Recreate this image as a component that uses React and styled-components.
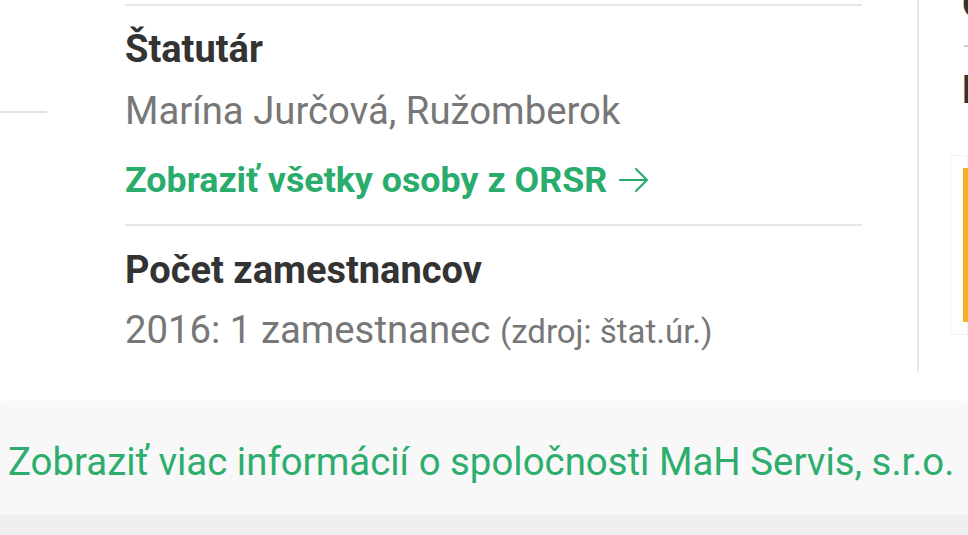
import React from "react"
import styled, { createGlobalStyle } from "styled-components"

const GlobalStyle = createGlobalStyle`
  html, body {
    margin: 0;
    padding: 0;
    background: #ffffff;
    font-family: Roboto, "Liberation Sans", Arial, sans-serif;
  }
`

const Page = styled.div`
  width: 968px;
  height: 535px;
  overflow: hidden;
  display: flex;
  flex-direction: column;
  background: #ffffff;
`

const Columns = styled.div`
  display: flex;
  height: 372px;
  flex-shrink: 0;
`

const Side = styled.aside`
  width: 47px;
  padding-top: 111px;
  flex-shrink: 0;
`

const SideRule = styled.div`
  height: 2px;
  background: #e2e2e2;
`

const Main = styled.main`
  width: 737px;
  flex-shrink: 0;
  margin-left: 23px;
  padding: 4px 55px 0 55px;
  border-right: 2px solid #e8e8e8;
`

const Section = styled.section`
  border-top: 2px solid #e6e6e6;
  padding: ${p => p.$top}px 0 ${p => p.$bottom}px;
`

const Label = styled.h3`
  margin: 0;
  font-size: 38px;
  line-height: 46px;
  font-weight: 700;
  color: #333333;
`

const Value = styled.p`
  margin: ${p => p.$gap}px 0 0;
  font-size: 38.3px;
  line-height: 46px;
  color: #777777;
`

const Source = styled.span`
  font-size: 33px;
`

const MoreLink = styled.a`
  display: flex;
  align-items: center;
  gap: 11px;
  margin-top: 23px;
  font-size: 35.8px;
  line-height: 46px;
  font-weight: 700;
  color: #29ac6c;
  text-decoration: none;
`

const Aside = styled.aside`
  flex: 1;
  padding-left: 43px;
  overflow: hidden;
  white-space: nowrap;
`

const AsideTitle = styled.div`
  margin-top: ${p => p.$top}px;
  font-size: 38px;
  line-height: 46px;
  font-weight: 700;
  color: #333333;
`

const AsideMeta = styled.div`
  font-size: 20px;
  line-height: 24px;
  color: #c4c4c4;
  margin-top: 8px;
`

const Notice = styled.div`
  margin-top: 42px;
  margin-left: -12px;
  padding: 12px 0 12px 12px;
  border: 1px solid #f3f3f3;
`

const NoticeBar = styled.div`
  height: 154px;
  border-left: 6px solid #f5b027;
`

const Footer = styled.footer`
  margin-top: 30px;
  height: 113px;
  flex-shrink: 0;
  display: flex;
  align-items: center;
  padding: 6px 0 0 8px;
  box-sizing: border-box;
  background: #f8f8f8;
  box-shadow: 0 -1px 2px rgba(0, 0, 0, 0.04);
`

const FooterLink = styled.a`
  font-size: 38.4px;
  line-height: 46px;
  color: #2dad6e;
  text-decoration: none;
  white-space: nowrap;
`

const Bottom = styled.div`
  flex: 1;
  background: #efefef;
`

function Arrow() {
  return (
    <svg width="32" height="26" viewBox="0 0 32 26" fill="none">
      <path
        d="M2 13H29M18 2L29 13L18 24"
        stroke="#29ac6c"
        strokeWidth="2.2"
        strokeLinecap="round"
        strokeLinejoin="round"
      />
    </svg>
  )
}

export default function App() {
  return (
    <Page>
      <GlobalStyle />
      <Columns>
        <Side>
          <SideRule />
        </Side>
        <Main>
          <Section $top={20} $bottom={21}>
            <Label>Štatutár</Label>
            <Value $gap={16}>Marína Jurčová, Ružomberok</Value>
            <MoreLink href="#">
              Zobraziť všetky osoby z ORSR
              <Arrow />
            </MoreLink>
          </Section>
          <Section $top={21} $bottom={0}>
            <Label>Počet zamestnancov</Label>
            <Value $gap={14}>
              2016: 1 zamestnanec <Source>(zdroj: štat.úr.)</Source>
            </Value>
          </Section>
        </Main>
        <Aside>
          <AsideTitle $top={-19}>Obchodný register</AsideTitle>
          <AsideMeta>–</AsideMeta>
          <AsideTitle $top={8}>Profil</AsideTitle>
          <Notice>
            <NoticeBar />
          </Notice>
        </Aside>
      </Columns>
      <Footer>
        <FooterLink href="#">
          Zobraziť viac informácií o spoločnosti MaH Servis, s.r.o.
        </FooterLink>
      </Footer>
      <Bottom />
    </Page>
  )
}
